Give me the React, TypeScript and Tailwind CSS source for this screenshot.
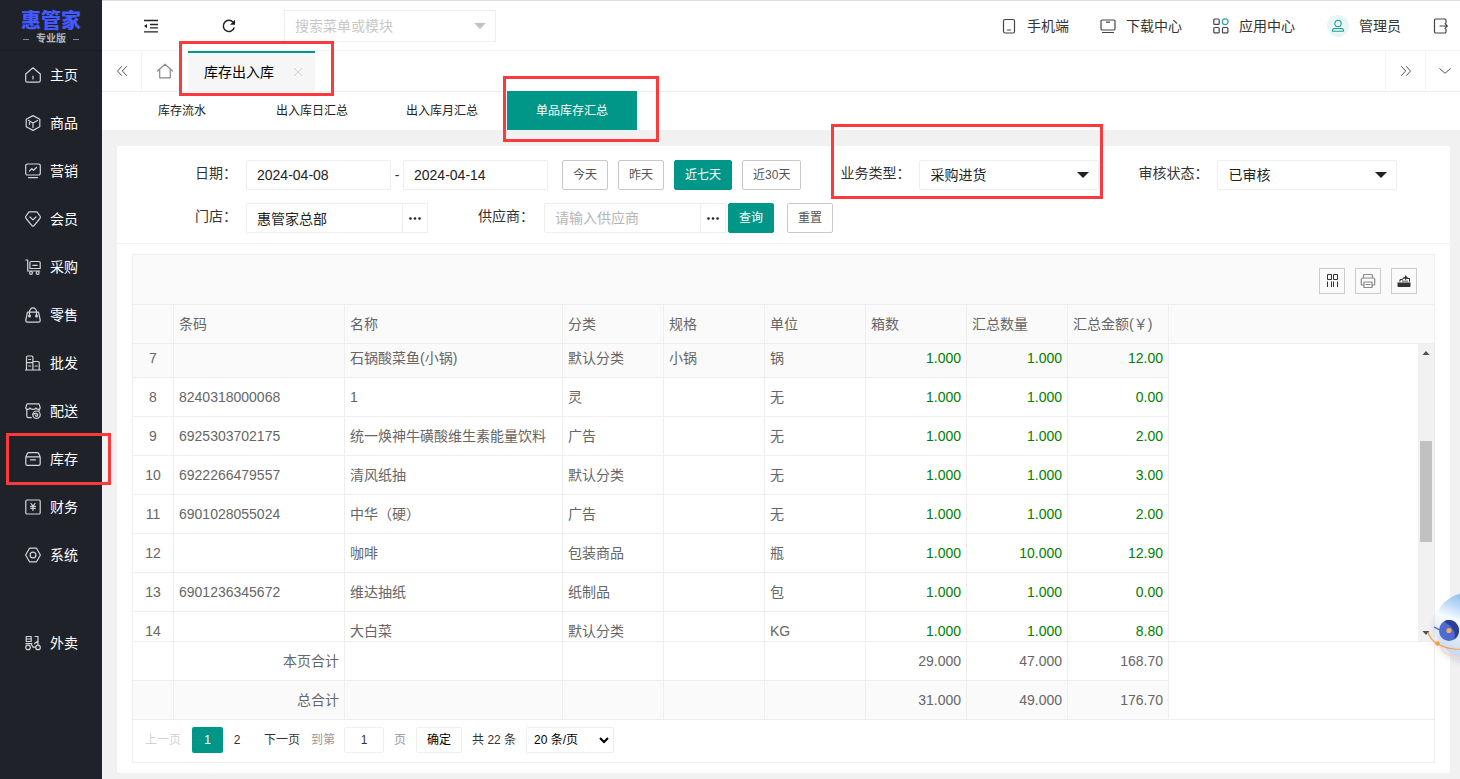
import React from "react";

type IconProps = { children: React.ReactNode; className?: string };

function Icon({ children, className = "size-4" }: IconProps) {
  return (
    <svg
      viewBox="0 0 16 16"
      className={`shrink-0 ${className}`}
      fill="none"
      stroke="currentColor"
      strokeWidth="1.2"
      strokeLinecap="round"
      strokeLinejoin="round"
      aria-hidden="true"
    >
      {children}
    </svg>
  );
}

const menu: { label: string; marked?: boolean; icon: React.ReactNode }[] = [
  { label: "主页", icon: <path d="M.7 7 8 .8 15.300 7v6.500a1.600 1.600 0 0 1-1.600 1.600H2.300A1.600 1.600 0 0 1 .7 13.500zM8 9v3" /> },
  { label: "商品", icon: <path d="M8 .6 14.800 4.200v7.600L8 15.400 1.200 11.800V4.200zM3.500 5.400 8 7.900l4.500-2.500M8 7.900V12.500M4.500 7.500v2" /> },
  { label: "营销", icon: <path d="M2.500 1h11a1.800 1.800 0 0 1 1.800 1.800v7.400a1.800 1.800 0 0 1-1.800 1.800h-11A1.800 1.800 0 0 1 .7 10.200V2.800A1.800 1.800 0 0 1 2.500 1zM4.500 8l2.300-2.300 1.700 1.600L11.500 4.500M3.500 14.600h9" /> },
  { label: "会员", icon: <path d="M4 .8h8L15.300 5.500Q15.500 7 14.500 8L8.800 14.800q-.8.800-1.600 0L1.500 8Q.5 7 .7 5.500zM5 6l3 2.900L11 6" /> },
  { label: "采购", icon: <><path d="M.7 1h2v11h12M6 2.500h8a1.200 1.200 0 0 1 1.200 1.200V9.500H4.900V3.600A1.100 1.100 0 0 1 6 2.500zM7.800 6.300h4.400" /><circle cx="6" cy="13.900" r="1.400" /><circle cx="12.700" cy="13.900" r="1.400" /></> },
  { label: "零售", icon: <><path d="M2.500 5.200h11L15.200 13q.2 2-1.700 2.200h-11Q.6 15 .8 13zM4.500 9V5a3.500 4.200 0 0 1 7 0v4" /><circle cx="4.500" cy="9" r=".9" /><circle cx="11.500" cy="9" r=".9" /></> },
  { label: "批发", icon: <path d="M1.500 15V2.200A1.200 1.200 0 0 1 2.700 1h4a1.200 1.200 0 0 1 1.200 1.200V15M7.900 6.500h5a1.300 1.300 0 0 1 1.300 1.300V15M.5 15h15M3.700 4.500h2M1.500 7.700h6.400M3.700 11h2M10 11h2.200" /> },
  { label: "配送", icon: <><path d="M2 .9h12l1.200 3.600q0 1.900-1.900 1.900T11 4.900Q10.500 6.400 8 6.400T5 4.900Q4.600 6.400 2.700 6.400T.8 4.500zM1.800 6.400V13a1.600 1.600 0 0 0 1.600 1.600h3M14.200 6.400V8" /><circle cx="11.500" cy="11.700" r="3.700" /><path d="M8 11.200q2.500-1.500 4.800 0M10.300 12q.5 1.700 2.200 1.200v-2" /></> },
  { label: "库存", marked: true, icon: <path d="M.8 6 2.300 2.600Q2.800 1.700 3.800 1.700h8.400q1 0 1.500.9L15.200 6v6.800a1.600 1.600 0 0 1-1.600 1.600H2.400A1.600 1.600 0 0 1 .8 12.800zM1 5.800h14M5.500 8.800h5" /> },
  { label: "财务", icon: <path d="M2 1h12a1.200 1.200 0 0 1 1.200 1.200v11.600A1.200 1.200 0 0 1 14 15H2A1.200 1.200 0 0 1 .8 13.800V2.200A1.200 1.200 0 0 1 2 1zM6 4.500l2 2.500 2-2.500M8 7v4.500M5.700 7.400h4.600M5.700 9.400h4.600" /> },
  { label: "系统", icon: <><path d="M4.500 1.200h7L15.400 8l-3.900 6.800h-7L.6 8z" /><circle cx="8" cy="8" r="2.900" /></> },
];

const takeaway = {
  label: "外卖",
  icon: <><path d="M1.200 1.500h5v5h-5zM1.200 4h5M.8 8.600h6M10 1.500h3V6L9.600 8.600M6.500 9.500l1.500 2.700h2.500M13 6v3.500" /><circle cx="3" cy="12.400" r="2.300" /><circle cx="13" cy="12.400" r="2.300" /></>,
};

const columns = ["", "条码", "名称", "分类", "规格", "单位", "箱数", "汇总数量", "汇总金额(￥)"];

const rows: string[][] = [
  ["7", "", "石锅酸菜鱼(小锅)", "默认分类", "小锅", "锅", "1.000", "1.000", "12.00"],
  ["8", "8240318000068", "1", "灵", "", "无", "1.000", "1.000", "0.00"],
  ["9", "6925303702175", "统一焕神牛磺酸维生素能量饮料", "广告", "", "无", "1.000", "1.000", "2.00"],
  ["10", "6922266479557", "清风纸抽", "默认分类", "", "无", "1.000", "1.000", "3.00"],
  ["11", "6901028055024", "中华（硬）", "广告", "", "无", "1.000", "1.000", "2.00"],
  ["12", "", "咖啡", "包装商品", "", "瓶", "1.000", "10.000", "12.90"],
  ["13", "6901236345672", "维达抽纸", "纸制品", "", "包", "1.000", "1.000", "0.00"],
  ["14", "", "大白菜", "默认分类", "", "KG", "1.000", "1.000", "8.80"],
];

const totals: string[][] = [
  ["", "本页合计", "", "", "", "", "29.000", "47.000", "168.70"],
  ["", "总合计", "", "", "", "", "31.000", "49.000", "176.70"],
];

function Columns() {
  return (
    <colgroup>
      <col className="w-[41px]" />
      <col className="w-[171px]" />
      <col className="w-[218px]" />
      {columns.slice(3).map((c) => (
        <col key={c} className="w-[101px]" />
      ))}
    </colgroup>
  );
}

const tableClass = "w-[1036px] table-fixed border-separate border-spacing-0";
const cellClass = "h-[39px] overflow-hidden border-r border-b border-[#eee] px-[5px] py-0 leading-5 font-normal whitespace-nowrap";

function Mark({ className }: { className: string }) {
  return <span className={`pointer-events-none absolute z-20 border-3 border-[#fc3a3b] ${className}`} />;
}

function MenuItem({ label, icon, marked }: { label: string; icon: React.ReactNode; marked?: boolean }) {
  return (
    <li className="relative">
      <a href="#" className="flex h-12 items-center gap-[9px] pl-[25px] text-white">
        <span className="flex text-[#d5d6d8]"><Icon>{icon}</Icon></span>
        <span>{label}</span>
      </a>
      {marked && <Mark className="-inset-y-[2px] -right-[9px] left-[6px]" />}
    </li>
  );
}

const plainButton = "h-[30px] rounded-[2px] border border-[#c9c9c9] bg-white px-[10px] text-xs text-[#555]";
const tealButton = "h-[30px] rounded-[2px] border border-[#009688] bg-[#009688] px-[10px] text-xs text-white";
const boxClass = "h-[30px] rounded-[2px] border border-[#eee] bg-white pl-[10px] text-sm text-[#222] outline-none";
const labelClass = "h-[30px] shrink-0 text-sm leading-[26px] whitespace-nowrap text-[#333]";

function Select({ id, value }: { id: string; value: string }) {
  return (
    <div className="relative w-[180px]">
      <select id={id} className={`w-full appearance-none ${boxClass}`}>
        <option>{value}</option>
      </select>
      <svg viewBox="0 0 12 6" className="pointer-events-none absolute top-3 right-[10px] h-[6px] w-3" fill="#222" aria-hidden="true">
        <path d="M0 0h12L6 6z" />
      </svg>
    </div>
  );
}

function Picker({ id, value, placeholder }: { id: string; value?: string; placeholder?: string }) {
  return (
    <div className="flex w-[182px]">
      <input id={id} defaultValue={value} placeholder={placeholder} className={`min-w-0 flex-1 placeholder:text-[#b5b5b5] ${boxClass}`} />
      <button type="button" aria-label="选择" className="-ml-px flex h-[30px] w-[26px] items-center justify-center border border-[#eee] text-[#222]">
        <svg viewBox="0 0 12 3" className="h-[3px] w-3" fill="currentColor">
          <circle cx="1.500" cy="1.500" r="1.300" /><circle cx="6" cy="1.500" r="1.300" /><circle cx="10.500" cy="1.500" r="1.300" />
        </svg>
      </button>
    </div>
  );
}

function Sidebar() {
  return (
    <aside className="w-[102px] shrink-0 bg-[#20222a] text-sm">
      <div className="flex h-[51px] flex-col items-center border-b border-[#1b1d24] pt-[9px]">
        <div className="text-[20px] leading-6 font-black text-[#4459ff]">惠管家</div>
        <div className="flex items-center gap-[7px] text-[10px] leading-3 font-bold text-[#b5b6b9]">
          <span className="h-px w-[6px] bg-[#85878c]" />
          专业版
          <span className="h-px w-[6px] bg-[#85878c]" />
        </div>
      </div>
      <nav>
        <ul>
          {menu.map((m) => <MenuItem key={m.label} {...m} />)}
        </ul>
        <ul className="mt-10">
          <MenuItem {...takeaway} />
        </ul>
      </nav>
    </aside>
  );
}

function Header() {
  return (
    <header className="flex h-[51px] items-center border-t border-b border-t-[#ddd] border-b-[#f3f3f3] text-sm text-[#333]">
      <button type="button" aria-label="收起菜单" className="ml-[41px]">
        <svg viewBox="0 0 16 16" className="size-4" fill="none" stroke="#222" strokeWidth="1.300">
          <path d="M1 2.500h14M7 6.500h8M7 9.800h8M1 13.800h14" />
          <path d="M1 8.100 4 6v4.200z" fill="#222" stroke="none" />
        </svg>
      </button>
      <button type="button" aria-label="刷新" className="ml-[63px]">
        <svg viewBox="0 0 14 14" className="size-[14px]" fill="none" stroke="#222" strokeWidth="1.500">
          <path d="M12.300 8.500A5.600 5.600 0 1 1 11.200 3.300" />
          <path d="M13 .8v5H8z" fill="#222" stroke="none" />
        </svg>
      </button>
      <div className="relative ml-12 w-[212px]">
        <input aria-label="搜索菜单或模块" placeholder="搜索菜单或模块" className="h-8 w-full border border-[#eee] pl-[10px] outline-none placeholder:text-[#c8c8c8]" />
        <svg viewBox="0 0 12 6" className="pointer-events-none absolute top-[13px] right-[10px] h-[6px] w-3" fill="#c2c2c2"><path d="M0 0h12L6 6z" /></svg>
      </div>
      <nav className="ml-auto flex items-center pr-[11px]">
        <a href="#" className="flex items-center gap-[10px]">
          <Icon className="size-4 text-[#444]"><path d="M4 1.500h8a1.500 1.500 0 0 1 1.500 1.500v10.500A1.500 1.500 0 0 1 12 15H4a1.500 1.500 0 0 1-1.500-1.500V3A1.500 1.500 0 0 1 4 1.500zM6.500 12h3" /></Icon>
          手机端
        </a>
        <a href="#" className="ml-[31px] flex items-center gap-[10px]">
          <Icon className="size-4 text-[#444]"><path d="M2.300 2h11.400A1.300 1.300 0 0 1 15 3.300v7.400a1.300 1.300 0 0 1-1.300 1.300H2.300A1.300 1.300 0 0 1 1 10.700V3.300A1.300 1.300 0 0 1 2.300 2zM6.500 4.200h3M2.500 14.500h11" /></Icon>
          下载中心
        </a>
        <a href="#" className="ml-[31px] flex items-center gap-[10px]">
          <Icon className="size-4 text-[#444]">
            <rect x=".8" y="1" width="5.400" height="5.400" rx="1" />
            <rect x=".8" y="9.500" width="5.400" height="5.400" rx="1" />
            <rect x="9.500" y="9.500" width="5.400" height="5.400" rx="1" />
            <circle cx="12.200" cy="3.700" r="2.900" stroke="#26a69a" />
          </Icon>
          应用中心
        </a>
        <a href="#" className="ml-8 flex items-center gap-[10px]">
          <span className="flex size-[22px] items-center justify-center rounded-full bg-[#e8f6f5] text-[#1a9e92]">
            <Icon className="size-[14px]"><circle cx="8" cy="5" r="3.600" /><path d="M4 10.800h8q1.800 0 2.500 2.200 0 1-1 1h-11q-1 0-1-1Q2.200 10.800 4 10.800z" /></Icon>
          </span>
          管理员
        </a>
        <button type="button" aria-label="退出" className="ml-8 text-[#444]">
          <Icon><path d="M13 5V2.200A1.200 1.200 0 0 0 11.800 1H2.700a1.200 1.200 0 0 0-1.200 1.200v11.600A1.200 1.200 0 0 0 2.700 15h9.100a1.200 1.200 0 0 0 1.200-1.200V11M7 8h7M12 5.700 14.300 8 12 10.300" /></Icon>
        </button>
      </nav>
    </header>
  );
}

function TabBar() {
  return (
    <div className="flex h-10 text-sm text-[#222]">
      <button type="button" aria-label="向左" className="flex w-10 items-center justify-center border-r border-[#f3f3f3] text-[#444]">
        <Icon className="size-3"><path d="M7.500 2 2 8l5.500 6M14 2 8.500 8l5.500 6" /></Icon>
      </button>
      <a href="#" aria-label="主页" className="flex w-[46px] items-center justify-center text-[#8a8a8a]">
        <Icon className="size-4"><path d="M.5 8 8 1.200 15.500 8M2.700 6.500V14.800h10.600V6.500" /></Icon>
      </a>
      <div className="relative flex w-[127px] items-center border-t-2 border-[#009688] bg-[#f6f6f6] pl-4">
        <a href="#" className="whitespace-nowrap text-black">库存出入库</a>
        <button type="button" aria-label="关闭" className="ml-[19px] text-[#c6c6c6]">
          <Icon className="size-[10px]"><path d="M2 2l12 12M14 2 2 14" /></Icon>
        </button>
        <Mark className="-top-3 -right-[19px] -bottom-[5px] -left-[9px]" />
      </div>
      <button type="button" aria-label="向右" className="ml-auto flex w-10 items-center justify-center border-l border-[#f3f3f3] text-[#444]">
        <Icon className="size-3"><path d="M2 2l5.500 6L2 14M8.500 2 14 8l-5.500 6" /></Icon>
      </button>
      <button type="button" aria-label="更多" className="flex w-[35px] items-center justify-end border-l border-[#f3f3f3] pr-[9px] text-[#444]">
        <Icon className="size-3"><path d="M1 5l7 6 7-6" /></Icon>
      </button>
    </div>
  );
}

function SubTabs() {
  const tabs = ["库存流水", "出入库日汇总", "出入库月汇总", "单品库存汇总"];
  return (
    <nav className="flex h-[39px] border-t border-[#eee] pl-[15px] text-xs text-[#222]">
      {tabs.map((t, i) => (
        <a
          key={t}
          href="#"
          className={i === 3 ? "relative -mt-px flex w-[130px] items-center justify-center bg-[#009688] text-white" : "flex w-[130px] items-center justify-center"}
        >
          {t}
          {i === 3 && <Mark className="-top-[15px] -right-[22px] -bottom-3 -left-1" />}
        </a>
      ))}
    </nav>
  );
}

function Filters() {
  return (
    <form className="flex flex-col gap-[13px] border-b border-[#f3f3f3] pt-[14px] pb-[10px] pl-[78px]">
      <div className="flex">
        <label htmlFor="from" className={`w-[51px] ${labelClass}`}>日期：</label>
        <input id="from" defaultValue="2024-04-08" className={`w-[145px] ${boxClass}`} />
        <span className="w-3 text-center text-sm leading-[30px] text-[#333]">-</span>
        <input aria-label="结束日期" defaultValue="2024-04-14" className={`w-[145px] ${boxClass}`} />
        <div className="ml-[14px] flex gap-[10px] whitespace-nowrap">
          <button type="button" className={plainButton}>今天</button>
          <button type="button" className={plainButton}>昨天</button>
          <button type="button" className={tealButton}>近七天</button>
          <button type="button" className={plainButton}>近30天</button>
        </div>
        <div className="relative ml-[39px] flex">
          <label htmlFor="biz" className={`w-[79px] ${labelClass}`}>业务类型：</label>
          <Select id="biz" value="采购进货" />
          <Mark className="-top-9 -right-1 -bottom-[9px] -left-[9px]" />
        </div>
        <div className="ml-[39px] flex">
          <label htmlFor="audit" className={`w-[79px] ${labelClass}`}>审核状态：</label>
          <Select id="audit" value="已审核" />
        </div>
      </div>
      <div className="flex">
        <label htmlFor="shop" className={`w-[51px] ${labelClass}`}>门店：</label>
        <Picker id="shop" value="惠管家总部" />
        <label htmlFor="supplier" className={`ml-[50px] w-[66px] ${labelClass}`}>供应商：</label>
        <Picker id="supplier" placeholder="请输入供应商" />
        <button type="button" className={`ml-[2px] ${tealButton}`}>查询</button>
        <button type="reset" className={`ml-[13px] ${plainButton}`}>重置</button>
      </div>
    </form>
  );
}

function Cells({ row, green }: { row: string[]; green?: boolean }) {
  return (
    <>
      {row.map((v, i) => {
        const align = i === 0 ? "text-center" : i > 5 || (!green && i === 1) ? "text-right" : "text-left";
        const color = green && i > 5 ? "text-[#008000]" : "";
        return <td key={i} className={`${cellClass} ${align} ${color}`}>{v}</td>;
      })}
    </>
  );
}

const toolButton = "flex h-[26px] w-[26px] items-center justify-center border border-[#ccc] text-[#333]";

function DataGrid() {
  return (
    <section className="mx-[15px] mt-[10px] mb-[9px] border border-[#eee] text-sm text-[#666]">
      <div className="flex h-[50px] items-center justify-end gap-[10px] border-b border-[#eee] bg-[#fafafa] pt-[2px] pr-[17px]">
        <button type="button" aria-label="筛选列" className={toolButton}>
          <svg viewBox="0 0 14 14" className="size-[14px]" fill="none" stroke="currentColor" strokeWidth="1"><path d="M2.500.5h4v5h-4zM8.500.5h4v5h-4zM2.500 7.500V13M6.500 7.500V13M8.500 7.500V13M12.500 7.500V13" /></svg>
        </button>
        <button type="button" aria-label="打印" className={toolButton}>
          <Icon className="size-4 text-[#888]"><path d="M3.500 5V2.500q0-1 1-1h7q1 0 1 1V5M3.500 12H2.300q-1 0-1-1V6.500q0-1.500 1.500-1.500h10.400q1.500 0 1.500 1.500V11q0 1-1 1h-1.200M4 9h8v5.500H4zM6 11.500h4" /></Icon>
        </button>
        <button type="button" aria-label="导出" className={toolButton}>
          <svg viewBox="0 0 14 14" className="size-[14px]" fill="currentColor"><path d="M.5 8.500h13V12q0 1-1 1h-11q-1 0-1-1zM2 7.500 3 5h2v1H3.800l-.5 1.500zM10 4h3v3.800h-1V5h-2zM5 7q0-4 3-4V1l3 2.700L8 6.200V4.600Q6 4.600 5 7zM5 7.500h6v-.7H5z" /></svg>
        </button>
      </div>
      <div className="border-b border-[#eee] bg-[#fafafa]">
        <table className={`-mb-px ${tableClass}`}>
          <Columns />
          <thead>
            <tr>{columns.map((c, i) => <th key={i} scope="col" className={`${cellClass} text-left`}>{c}</th>)}</tr>
          </thead>
        </table>
      </div>
      <div className="flex h-[297px]">
        <div className="min-w-0 flex-1 overflow-hidden">
          <table className={`-mt-[5px] ${tableClass}`}>
            <Columns />
            <tbody>
              {rows.map((r, i) => <tr key={r[0]} className={i === 0 ? "bg-[#fafafa]" : ""}><Cells row={r} green /></tr>)}
            </tbody>
          </table>
        </div>
        <div className="flex w-4 flex-col items-center bg-[#f1f1f1]" aria-hidden="true">
          <svg viewBox="0 0 16 17" className="h-[17px] w-4" fill="#505050"><path d="M4.500 11h7L8 7z" /></svg>
          <div className="mt-20 h-[101px] w-3 bg-[#c1c1c1]" />
          <svg viewBox="0 0 16 17" className="mt-auto h-[17px] w-4" fill="#505050"><path d="M4.500 7h7L8 11z" /></svg>
        </div>
      </div>
      <div className="border-t border-[#eee]">
        <table className={tableClass}>
          <Columns />
          <tbody>
            {totals.map((r, i) => <tr key={r[1]} className={i === 1 ? "bg-[#fafafa]" : ""}><Cells row={r} /></tr>)}
          </tbody>
        </table>
      </div>
      <div className="-mt-px flex h-[43px] items-center border-t border-[#eee] pb-[2px] pl-3 text-xs whitespace-nowrap text-[#333]">
        <span className="text-[#d2d2d2]">上一页</span>
        <a href="#" className="ml-[11px] flex h-[26px] w-[31px] items-center justify-center rounded-[2px] bg-[#009688] text-white">1</a>
        <a href="#" className="flex w-7 justify-center">2</a>
        <a href="#" className="ml-[13px]">下一页</a>
        <label htmlFor="page" className="ml-[11px] text-[#999]">到第</label>
        <input id="page" defaultValue="1" className="ml-[9px] h-[26px] w-10 rounded-[2px] border border-[#eee] text-center outline-none" />
        <span className="ml-[10px] text-[#999]">页</span>
        <button type="button" className="ml-[10px] h-[26px] w-[46px] rounded-[2px] border border-[#eee] text-black">确定</button>
        <span className="ml-[10px]">共 22 条</span>
        <div className="relative ml-[10px] w-[88px]">
          <select aria-label="每页条数" className="h-[26px] w-full appearance-none rounded-[2px] border border-[#eee] pl-[7px] text-black outline-none">
            <option>20 条/页</option>
          </select>
          <svg viewBox="0 0 10 7" className="pointer-events-none absolute top-[10px] right-[5px] h-[7px] w-[10px]" fill="none" stroke="#000" strokeWidth="2"><path d="M1 1l4 4 4-4" /></svg>
        </div>
      </div>
    </section>
  );
}

function Assistant() {
  return (
    <svg viewBox="0 0 36 80" className="fixed right-0 bottom-[109px] z-10 h-20 w-9" role="img" aria-label="在线助手">
      <defs>
        <linearGradient id="head" x1=".7" y1="0" x2=".3" y2="1">
          <stop offset="0" stopColor="#78aee8" />
          <stop offset=".3" stopColor="#bcd9f7" />
          <stop offset=".5" stopColor="#f8fdff" />
          <stop offset="1" stopColor="#c5d5ee" />
        </linearGradient>
        <filter id="shade" x="-50%" y="-50%" width="200%" height="200%"><feGaussianBlur stdDeviation="3" /></filter>
      </defs>
      <ellipse cx="44" cy="41" rx="34" ry="32" fill="#8f9bd0" opacity=".3" filter="url(#shade)" />
      <path d="M17 56q1 9 19 12" fill="none" stroke="#f8d9bd" strokeWidth="1.500" />
      <ellipse cx="43" cy="35" rx="32" ry="32" fill="url(#head)" />
      <path d="M10 37l8 4" stroke="#4159a8" strokeWidth="1.300" />
      <ellipse cx="25" cy="40.500" rx="10" ry="10.500" fill="#4f6bcf" />
      <path d="M20 31.400a10 10.500 0 0 1 10 18.200q4-10-10-18.200z" fill="#2b3f99" />
      <circle cx="25" cy="40.500" r="2.600" fill="#f5ad60" />
      <path d="M4 42q2 8 10 12 8 5 22 5.500" fill="none" stroke="#f5a04c" strokeWidth="1.200" />
      <circle cx="13.500" cy="53.500" r="2.300" fill="#ff9d32" />
    </svg>
  );
}

export default function App() {
  return (
    <div className="flex min-h-screen bg-[#f1f1f1] font-['Liberation_Sans','Noto_Sans_CJK_SC',sans-serif]">
      <Sidebar />
      <div className="min-w-0 flex-1">
        <div className="bg-white">
          <Header />
          <TabBar />
          <SubTabs />
        </div>
        <main className="mt-4 mr-[10px] ml-[15px] rounded-[2px] bg-white pb-px">
          <Filters />
          <DataGrid />
        </main>
      </div>
      <Assistant />
    </div>
  );
}
